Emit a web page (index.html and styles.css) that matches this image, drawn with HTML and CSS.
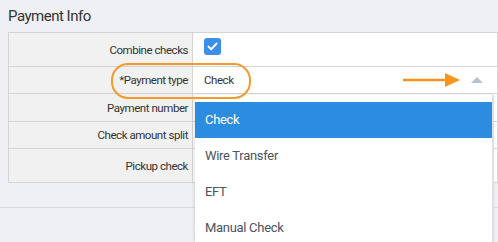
FILE: index.html
```html
<!DOCTYPE html>
<html lang="en">
<head>
    <meta charset="UTF-8">
    <title>Payment Info</title>
    <link rel="stylesheet" href="styles.css">
</head>
<body>
    <section class="payment-info">
        <h2 class="section-title">Payment Info</h2>
        <table class="form-table">
            <tr class="row-tall">
                <th>Combine checks</th>
                <td>
                    <span class="checkbox">
                        <svg width="11" height="9" viewBox="0 0 11 9"><path d="M1.5 4.6 L4.2 7.2 L9.5 1.6" fill="none" stroke="#fff" stroke-width="2" stroke-linecap="round" stroke-linejoin="round"/></svg>
                    </span>
                </td>
            </tr>
            <tr class="row-select">
                <th>*Payment type</th>
                <td>
                    <div class="select-value">
                        <span>Check</span>
                        <span class="caret"></span>
                    </div>
                </td>
            </tr>
            <tr class="row-mid">
                <th>Payment number</th>
                <td></td>
            </tr>
            <tr class="row-short">
                <th>Check amount split</th>
                <td></td>
            </tr>
            <tr class="row-tall">
                <th>Pickup check</th>
                <td></td>
            </tr>
        </table>

        <!-- open select menu -->
        <ul class="dropdown">
            <li class="selected">Check</li>
            <li>Wire Transfer</li>
            <li>EFT</li>
            <li>Manual Check</li>
        </ul>

        <!-- annotation marks -->
        <div class="highlight-ring"></div>
        <svg class="pointer-arrow" width="60" height="16" viewBox="0 0 60 16">
            <line x1="0" y1="8" x2="46" y2="8" stroke="#f7941d" stroke-width="2.5"/>
            <polygon points="42,1 57,8 42,15" fill="#f7941d"/>
        </svg>
    </section>

    <div class="footer-bar"></div>
</body>
</html>
```

FILE: styles.css
```css
/* General */
body {
    margin: 0;
    background-color: #eef0f5;
    font-family: Roboto, "Liberation Sans", sans-serif;
    color: #333;
    position: relative;
    height: 242px;
    overflow: hidden;
}

.payment-info {
    padding: 7px 1px 0 8px;
}

.section-title {
    margin: 0 0 7px;
    font-size: 15px;
    letter-spacing: -0.5px;
    font-weight: normal;
    color: #333;
    line-height: 18px;
}

/* Form table */
.form-table {
    width: 490px;
    border-collapse: collapse;
    font-size: 11.5px;
    letter-spacing: -0.45px;
}

.form-table th,
.form-table td {
    border: 1px solid #d4d4d4;
    padding: 0;
}

.form-table th {
    width: 179px;
    background-color: #f1f1f1;
    font-weight: normal;
    text-align: right;
    padding-right: 4px;
    color: #333;
}

.form-table td {
    background-color: #fff;
    padding-left: 11px;
}

.row-tall { height: 34px; }
.row-select { height: 27px; }
.row-mid { height: 28px; }
.row-short { height: 27px; }

.checkbox {
    display: flex;
    align-items: center;
    justify-content: center;
    width: 17px;
    height: 17px;
    margin-top: -7px;
    border-radius: 3px;
    background-color: #3b8fe8;
}

.select-value {
    display: flex;
    justify-content: space-between;
    align-items: center;
    padding-right: 14px;
    color: #333;
}

.caret {
    width: 0;
    height: 0;
    border-left: 6px solid transparent;
    border-right: 6px solid transparent;
    border-bottom: 6px solid #b9c1cc;
}

/* Dropdown */
.dropdown {
    position: absolute;
    left: 195px;
    top: 95px;
    width: 297px;
    height: 140px;
    margin: 0;
    padding: 7px 0 0;
    list-style: none;
    background-color: #fff;
    border-right: 2px solid #dde0e5;
    box-shadow: -1px 0 3px rgba(0, 0, 0, 0.12);
    font-size: 13px;
    letter-spacing: -0.3px;
}

.dropdown li {
    height: 36px;
    line-height: 36px;
    padding-left: 10px;
    color: #4b535f;
}

.dropdown li.selected {
    background-color: #2b8ce0;
    color: #fff;
}

/* Annotation */
.highlight-ring {
    position: absolute;
    left: 111px;
    top: 63px;
    width: 136px;
    height: 32px;
    border: 2px solid #f39a2b;
    border-radius: 17px;
}

.pointer-arrow {
    position: absolute;
    left: 403px;
    top: 72px;
}

/* Footer */
.footer-bar {
    margin-top: 24px;
    border-top: 1px solid #d8dade;
}
```
